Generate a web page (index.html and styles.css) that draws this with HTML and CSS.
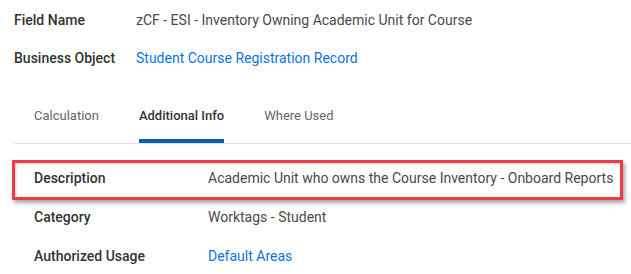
FILE: index.html
```html
<!DOCTYPE html>
<html lang="en">
<head>
<meta charset="utf-8">
<title>Field</title>
<link rel="stylesheet" href="styles.css">
</head>
<body>
<div class="page">
  <div class="summary">
    <div class="srow"><span class="slabel">Field Name</span><span class="svalue">zCF - ESI - Inventory Owning Academic Unit for Course</span></div>
    <div class="srow"><span class="slabel">Business Object</span><a class="svalue link" href="#">Student Course Registration Record</a></div>
  </div>
  <div class="tabs">
    <div class="tab">Calculation</div>
    <div class="tab active">Additional Info</div>
    <div class="tab">Where Used</div>
  </div>
  <div class="details">
    <div class="drow highlighted"><span class="dlabel">Description</span><span class="dvalue">Academic Unit who owns the Course Inventory - Onboard Reports</span></div>
    <div class="drow"><span class="dlabel">Category</span><span class="dvalue">Worktags - Student</span></div>
    <div class="drow"><span class="dlabel">Authorized Usage</span><a class="dvalue link" href="#">Default Areas</a></div>
  </div>
</div>
</body>
</html>
```
FILE: styles.css
```css
* { box-sizing: border-box; }
html, body { margin: 0; padding: 0; background: #fff; }
body {
  font-family: Roboto, "Noto Sans", "Liberation Sans", sans-serif;
  font-size: 14px;
  color: #494949;
  width: 631px;
  height: 274px;
  overflow: hidden;
}
.page { padding-top: 1px; }
.summary { padding-left: 14px; }
.srow {
  display: grid;
  grid-template-columns: 122px 1fr;
  line-height: 38px;
  height: 38px;
  white-space: nowrap;
}
.slabel, .dlabel { color: #333; font-weight: 500; }
.svalue, .dvalue { color: #494949; }
.link { color: #0875e1; text-decoration: none; }
.tabs {
  margin: 29px 0 0 14px;
  display: flex;
  gap: 40px;
  padding-left: 20px;
  border-bottom: 1px solid #e2e2e2;
  font-size: 13px;
}
.tab {
  line-height: 20px;
  padding-bottom: 13px;
  border-bottom: 4px solid transparent;
  color: #666;
}
.tab.active {
  color: #333;
  font-weight: 500;
  border-bottom-color: #0b5cb5;
}
.details { padding-top: 15px; }
.drow {
  display: grid;
  grid-template-columns: 174px 1fr;
  padding-left: 34px;
  line-height: 38px;
  height: 38px;
  white-space: nowrap;
  position: relative;
}
.drow + .drow { margin-top: 1px; }
.highlighted::after {
  content: "";
  position: absolute;
  left: 12px;
  right: 8px;
  top: 1px;
  bottom: -3px;
  border: 3px solid #ef3b43;
  box-shadow: 2px 3px 4px rgba(0,0,0,0.35), inset 1px 1px 3px rgba(0,0,0,0.2);
  pointer-events: none;
}
```
